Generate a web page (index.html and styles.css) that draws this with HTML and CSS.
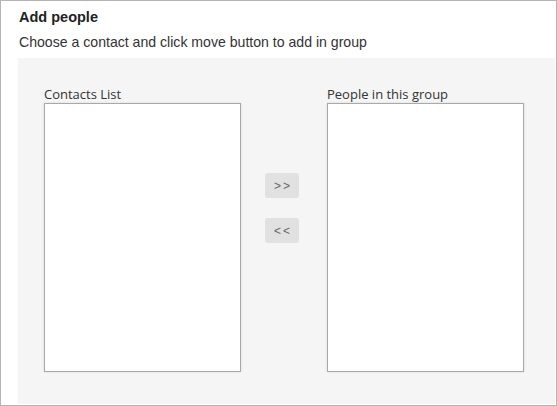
FILE: index.html
```html
<!DOCTYPE html>
<html>
<head>
<meta charset="utf-8">
<link rel="stylesheet" href="styles.css">
</head>
<body>
<div class="frame">
  <div class="header">
    <div class="title">Add people</div>
    <div class="subtitle">Choose a contact and click move button to add in group</div>
  </div>
  <div class="panel">
    <div class="column">
      <div class="label">Contacts List</div>
      <div class="listbox"></div>
    </div>
    <div class="actions">
      <button class="move">&gt;&gt;</button>
      <button class="move">&lt;&lt;</button>
    </div>
    <div class="column">
      <div class="label">People in this group</div>
      <div class="listbox"></div>
    </div>
  </div>
</div>
</body>
</html>
```
FILE: styles.css
```css
html, body {
  margin: 0;
  padding: 0;
  background: #ffffff;
}
.frame {
  box-sizing: border-box;
  width: 557px;
  height: 406px;
  border: 1px solid #b4b4b4;
  display: flex;
  flex-direction: column;
  padding: 0 1px 1px 17px;
}
.header {
  padding: 7px 0 0 1px;
  height: 50px;
  box-sizing: border-box;
  font-family: "Liberation Sans", Arial, sans-serif;
  color: #222;
}
.title {
  font-weight: bold;
  font-size: 14.5px;
  line-height: 18px;
}
.subtitle {
  font-size: 14.1px;
  line-height: 18px;
  margin-top: 7px;
  color: #333;
}
.panel {
  flex: 1;
  background: #f5f5f5;
  display: flex;
  padding: 27px 0 0 26px;
  margin-top: 7px;
}
.column {
  display: flex;
  flex-direction: column;
}
.label {
  font-family: "Open Sans", "Noto Sans", sans-serif;
  font-size: 13px;
  line-height: 18px;
  color: #333;
}
.listbox {
  box-sizing: border-box;
  width: 197px;
  height: 269px;
  background: #fff;
  border: 1px solid #a9a9a9;
  box-shadow: 0 0 2px rgba(0,0,0,0.12);
}
.actions {
  width: 86px;
  box-sizing: border-box;
  padding: 88px 0 0 24px;
  display: flex;
  flex-direction: column;
  gap: 20px;
}
.move {
  width: 34px;
  height: 25px;
  border: none;
  border-radius: 3px;
  background: #e1e1e1;
  color: #666;
  font-family: "Liberation Sans", Arial, sans-serif;
  font-size: 12px;
  letter-spacing: 2px;
  padding: 0 0 0 2px;
}
```
